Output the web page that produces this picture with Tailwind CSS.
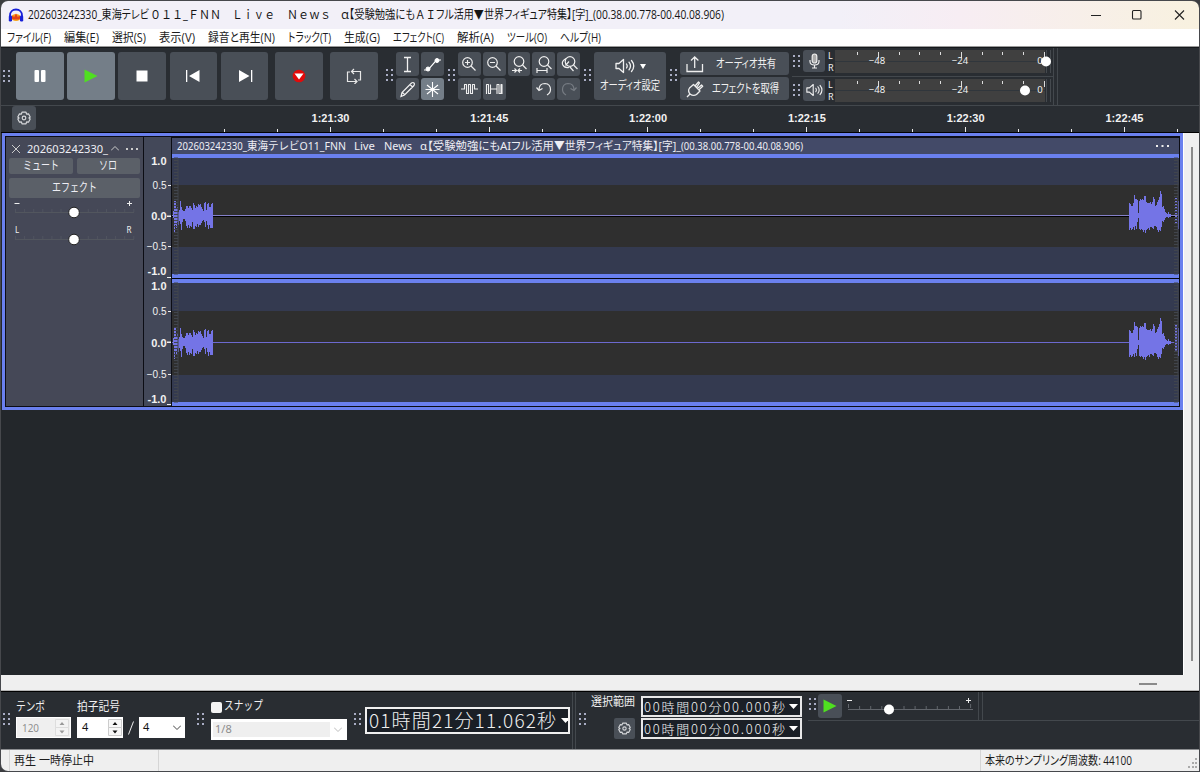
<!DOCTYPE html>
<html lang="ja">

<head>
  <meta charset="UTF-8">
  <meta name="viewport" content="width=device-width, initial-scale=1.0">
  <title>Audacity</title>
  <script src="https://cdn.jsdelivr.net/npm/@tailwindcss/browser@4"></script>
</head>

<body class="bg-[#3b3d40]">
  <!-- shared icons -->
  <svg class="hidden" xmlns="http://www.w3.org/2000/svg">
    <symbol id="grip" viewBox="0 0 8 12">
      <path fill="#a9adc4" d="M0 0h2v2H0zM5 0h2v2H5zM0 5h2v2H0zM5 5h2v2H5zM0 10h2v2H0zM5 10h2v2H5z" />
    </symbol>
    <symbol id="gear" viewBox="0 0 14 14">
      <g fill="none" stroke="#d5d7da" stroke-width="1.2" stroke-linejoin="round">
        <path d="M5 1.2h4l.6 1.9 1.9-.3L13.2 6l-1.3 1 1.3 1-1.7 3.2-1.9-.3-.6 1.9H5l-.6-1.9-1.9.3L.8 8l1.3-1L.8 6l1.7-3.2 1.9.3z" />
        <circle cx="7" cy="7" r="1.8" />
      </g>
    </symbol>
    <symbol id="speaker" viewBox="0 0 20 16">
      <g fill="none" stroke="#f0f0f0" stroke-width="1.3" stroke-linejoin="round" stroke-linecap="round">
        <path d="M1 5.5h3L8.500 1.500v13L4 10.500H1z" />
        <path d="M11.500 6q1.400 2 0 4M14 4.200q3 3.800 0 7.600M16.500 2.500q4.500 5.500 0 11" />
      </g>
    </symbol>
  </svg>

  <div class="flex h-[772px] w-[1200px] flex-col overflow-hidden rounded-t-lg rounded-bl-lg border border-[#46484c] bg-[#23272b] font-['Noto_Sans','Noto_Sans_CJK_JP',sans-serif] text-xs">

    <!-- title bar -->
    <div class="flex h-[28px] shrink-0 items-center bg-linear-to-r from-[#f2f0f8] from-70% via-[#f7edf3] via-80% to-[#f8f1df] pl-[7px] font-['Open_Sans','Noto_Sans_CJK_JP',sans-serif] text-[#151515]">
      <svg class="mr-[4px] h-[15px] w-[16px]" viewBox="0 0 16 15">
        <ellipse cx="8" cy="9.500" rx="4.800" ry="3.600" fill="#f7a41c" />
        <path d="M3 9.500l2-2 1 2 2-4 2 4 1-2 2 2-2 2H5z" fill="#e2401b" />
        <path d="M2 10V7.500C2 4 4.500 1.500 8 1.500S14 4 14 7.500V10" fill="none" stroke="#1720d8" stroke-width="1.800" />
        <rect x=".8" y="7.500" width="3.200" height="6" rx="1.200" fill="#1720d8" />
        <rect x="12" y="7.500" width="3.200" height="6" rx="1.200" fill="#1720d8" />
      </svg>
      <span data-w="121" class="[font-feature-settings:'palt']">202603242330_東海テレビ</span>
      <span class="ml-px" data-w="71">０１１_ＦＮＮ</span>
      <span class="ml-[11px]" data-w="43">Ｌｉｖｅ</span>
      <span class="ml-[12px]" data-w="44">Ｎｅｗｓ</span>
      <span class="ml-[10px]" data-w="8">α</span>
      <span data-w="66" class="[font-feature-settings:'palt']">【受験勉強にも</span>
      <span data-w="21">ＡＩ</span>
      <span data-w="157" class="[font-feature-settings:'palt']">フル活用▼世界フィギュア特集】[字]_</span>
      <span data-w="131">(00.38.00.778-00.40.08.906)</span>
      <svg class="mr-[14px] ml-auto h-[12px] w-[94px]" viewBox="0 0 94 12" fill="none" stroke="#222" stroke-width="1.100">
        <path d="M0 6.500h10M84 1.500l9 9M93 1.500l-9 9" />
        <rect x="41.500" y="1.500" width="8.500" height="8.500" rx="1" />
      </svg>
    </div>

    <!-- menu -->
    <div class="flex h-[18px] shrink-0 items-center gap-[13px] border-b border-[#9a9a9a] bg-white pl-[6px] font-['Open_Sans','Noto_Sans_CJK_JP',sans-serif] text-[#1c1c1c] [font-feature-settings:'palt']">
      <span data-w="44">ファイル(F)</span>
      <span data-w="35">編集(E)</span>
      <span data-w="34">選択(S)</span>
      <span data-w="36">表示(V)</span>
      <span data-w="67">録音と再生(N)</span>
      <span data-w="43">トラック(T)</span>
      <span data-w="36">生成(G)</span>
      <span data-w="51">エフェクト(C)</span>
      <span data-w="37">解析(A)</span>
      <span data-w="40">ツール(O)</span>
      <span data-w="41">ヘルプ(H)</span>
    </div>

    <!-- top toolbars -->
    <div class="flex h-[59px] shrink-0 border-t border-b border-t-[#15181b] border-b-[#43484d] bg-[#292d32] text-[#f0f0f0]">
      <div class="flex w-[381px] shrink-0 items-center pl-[2px] pb-px">
        <svg class="mr-[5px] h-3 w-2"><use href="#grip" /></svg>
        <div class="flex gap-[3.500px] *:flex *:h-12 *:w-[47.700px] *:items-center *:justify-center *:rounded-[3px]">
          <button class="bg-[#747e88]"><svg class="size-4" viewBox="0 0 16 16" fill="#fff"><rect x="2.500" y="2" width="4.500" height="12" rx="1" /><rect x="9" y="2" width="4.500" height="12" rx="1" /></svg></button>
          <button class="bg-[#747e88]"><svg class="size-4" viewBox="0 0 16 16" fill="#4fe020"><path d="M1.500 1.500L14.500 8l-13 6.500z" /></svg></button>
          <button class="bg-[#494f57]"><svg class="size-4" viewBox="0 0 16 16" fill="#fff"><path d="M2.500 2.500h11v11h-11z" /></svg></button>
          <button class="bg-[#494f57]"><svg class="size-4" viewBox="0 0 16 16" fill="#fff"><path d="M1 2h1.300v12H1zM14.500 2v12L4 8z" /></svg></button>
          <button class="bg-[#494f57]"><svg class="size-4" viewBox="0 0 16 16" fill="#fff"><path d="M14 2h1.300v12H14zM2 2v12l10.500-6z" /></svg></button>
        </div>
        <button class="ml-[7px] flex h-12 w-[48px] items-center justify-center rounded-[3px] bg-[#494f57]"><svg class="size-4" viewBox="0 0 16 16"><circle cx="8" cy="8" r="6.300" fill="#e00b0b" /><path d="M3.500 5.500h9L8 11.500z" fill="#fff" /></svg></button>
        <button class="ml-[7px] flex h-12 w-[48px] items-center justify-center rounded-[3px] bg-[#494f57]"><svg class="size-4" viewBox="0 0 16 16" fill="none" stroke="#e8e8e8" stroke-width="1.200"><path d="M4 4H1.500v9.500h9M8.500 11l2.500 2.500L8.500 16M12 12h2.500V3.500h-9M8 1L5.500 3.500 8 6" /></svg></button>
      </div>

      <svg class="mt-[21px] mr-[2px] ml-[4px] h-3 w-2 shrink-0"><use href="#grip" /></svg>
      <div class="mt-1 grid h-12 w-[48px] shrink-0 grid-cols-2 gap-[2px] *:flex *:items-center *:justify-center *:rounded-[3px] *:bg-[#494f57]">
        <button><svg class="size-[17px]" viewBox="0 0 17 17" fill="none" stroke="#f2f2f2" stroke-width="1.300"><path d="M5 1.500h7M5 15.500h7M8.500 1.500v14" /></svg></button>
        <button><svg class="size-[19px]" viewBox="0 0 19 19" stroke="#fff" fill="#fff"><path d="M1 15h4L13.500 5H18" fill="none" stroke-width="1.200" /><circle cx="5" cy="14" r="2" /><circle cx="14" cy="5.500" r="2" /></svg></button>
        <button><svg class="size-[17px]" viewBox="0 0 17 17" fill="none" stroke="#f2f2f2" stroke-width="1.200"><path d="M2 15.500l1-4L12.500 2q1.500-1 2.500 0t0 2.500L5.500 14zM11 3.500L13.500 6M3 11.500q2 .5 2.500 2.500" /></svg></button>
        <button class="bg-[#747e88]!"><svg class="size-[17px]" viewBox="0 0 17 17" fill="none" stroke="#fff" stroke-width="1.100"><path d="M8.500 1v15M1.500 8.500h14M3 4l11 9M14 4L3 13" /></svg></button>
      </div>

      <svg class="mt-[21px] mr-[2px] ml-[4px] h-3 w-2 shrink-0"><use href="#grip" /></svg>
      <div class="mt-1 grid h-12 w-[122px] shrink-0 grid-cols-5 gap-[2px] *:flex *:items-center *:justify-center *:rounded-[3px] *:bg-[#494f57]">
        <button><svg class="size-4" viewBox="0 0 16 16" fill="none" stroke="#eee" stroke-width="1.200"><circle cx="6.500" cy="6.500" r="4.800" /><path d="M10 10l4.500 4.500M4 6.500h5M6.500 4v5" /></svg></button>
        <button><svg class="size-4" viewBox="0 0 16 16" fill="none" stroke="#eee" stroke-width="1.200"><circle cx="6.500" cy="6.500" r="4.800" /><path d="M10 10l4.500 4.500M4 6.500h5" /></svg></button>
        <button><svg class="size-[18px]" viewBox="0 0 18 18" fill="none" stroke="#eee" stroke-width="1.200"><circle cx="9" cy="6.500" r="4.800" /><path d="M12.500 10l4 4M2 15.500h4.500M8 15.500h4M4.500 13.500l2 2-2 2M10 13.500l-2 2 2 2" /></svg></button>
        <button><svg class="size-[18px]" viewBox="0 0 18 18" fill="none" stroke="#eee" stroke-width="1.200"><circle cx="9" cy="6.500" r="4.800" /><path d="M12.500 10l4 4M2 15.500h10M2 13v5M12 13v5" /></svg></button>
        <button><svg class="size-[18px]" viewBox="0 0 18 18" fill="none" stroke="#eee" stroke-width="1.200"><circle cx="10" cy="6.500" r="4.800" /><path d="M13.500 10l4 4M6 3.500Q1.500 6 2.500 9.500q2 4 6.500 3M9.500 11.500l4 4.500M5.500 10.500L9 6.500" /></svg></button>
        <button><svg class="h-[14px] w-[18px]" viewBox="0 0 18 14" fill="none" stroke="#eee" stroke-width="1.100" stroke-linejoin="round"><path d="M1 7h3.500V2.500h2v9h2v-9h2v9h2v-9h2V7H18" /></svg></button>
        <button><svg class="h-[14px] w-[18px]" viewBox="0 0 18 14" fill="none" stroke="#eee" stroke-width="1.100" stroke-linejoin="round"><path d="M1.500 12V2.500h2v9h2V7h6.500v4.500h0v-9h2v9h2v-9h1V12M5.500 7V2.500" /></svg></button>
        <button class="col-start-4"><svg class="size-4" viewBox="0 0 16 16" fill="none" stroke="#eee" stroke-width="1.200"><path d="M3 9Q3 2.500 9 2.500q5.500.5 5.500 6 0 3.500-3.500 5.500M.5 6.500L3 9.500l3.500-2" /></svg></button>
        <button><svg class="size-4" viewBox="0 0 16 16" fill="none" stroke="#777c83" stroke-width="1.200"><path d="M13 9Q13 2.500 7 2.500 1.500 3 1.500 8.500 1.500 12 5 14M15.500 6.500L13 9.500l-3.500-2" /></svg></button>
      </div>

      <svg class="mt-[21px] mr-[2px] ml-[4px] h-3 w-2 shrink-0"><use href="#grip" /></svg>
      <button class="mt-1 flex h-12 w-[72px] shrink-0 flex-col items-center rounded-[3px] bg-[#494f57] pt-[6px] [font-feature-settings:'palt']">
        <span class="flex items-center gap-[5px]"><svg class="h-4 w-5"><use href="#speaker" /></svg><svg class="h-[5px] w-[6px]" viewBox="0 0 6 5" fill="#fff"><path d="M0 0h6L3 5z" /></svg></span>
        <span class="mt-[4px]" data-w="60">オーディオ設定</span>
      </button>

      <svg class="mt-[21px] mr-[2px] ml-[4px] h-3 w-2 shrink-0"><use href="#grip" /></svg>
      <div class="mt-1 grid h-12 w-[109px] shrink-0 grid-rows-2 gap-[2px] *:flex *:items-center *:rounded-[3px] *:bg-[#494f57] *:pl-[6px]">
        <button class="[font-feature-settings:'palt']"><svg class="mr-[12px] size-[18px]" viewBox="0 0 18 18" fill="none" stroke="#eee" stroke-width="1.300"><path d="M1 9v7.500h15.500V9M8.700 13V2M5 5.500L8.700 2l3.700 3.500" /></svg><span data-w="60">オーディオ共有</span></button>
        <button class="[font-feature-settings:'palt']"><svg class="mr-[8px] size-[18px]" viewBox="0 0 18 18" fill="none" stroke="#eee" stroke-width="1.300" stroke-linejoin="round"><path d="M1 17l3-3q-2.500-3-.5-6l4-3.500L14 11l-3.500 3.500q-3 2-6.500-.5M9 6l3.500-4 1 1L10.500 7.500M11.500 8.500L15.500 5l1.200 1.200-4 3.800" /></svg><span data-w="67">エフェクトを取得</span></button>
      </div>

      <!-- level meters -->
      <div class="ml-[3px] flex w-[261px] shrink-0 flex-col">
        <div class="flex h-[29px] border-b border-[#43484d] pt-[2px]">
          <svg class="mt-[5px] mr-[2px] ml-px h-3 w-2"><use href="#grip" /></svg>
          <button class="flex h-[22px] w-[22px] items-center justify-center rounded-[3px] bg-[#494f57]"><svg class="h-4 w-[11px]" viewBox="0 0 11 16" fill="none" stroke="#eee" stroke-width="1.200"><rect x="3.200" y="1" width="4.600" height="9" rx="2.300" fill="#aaa" /><path d="M1 7v1.500q0 3.500 4.500 3.500T10 8.500V7M5.500 12v3M3 15h5" /></svg></button>
          <div class="ml-[3px] flex w-[7px] flex-col text-[9px] leading-3"><span>L</span><span>R</span></div>
          <svg class="h-6 w-[218px] shrink-0" data-knob="210"></svg>
        </div>
        <div class="flex pt-[2px]">
          <svg class="mt-[5px] mr-[2px] ml-px h-3 w-2"><use href="#grip" /></svg>
          <button class="flex h-[22px] w-[22px] items-center justify-center rounded-[3px] bg-[#494f57]"><svg class="h-[14px] w-[17px]"><use href="#speaker" /></svg></button>
          <div class="ml-[3px] flex w-[7px] flex-col text-[9px] leading-3"><span>L</span><span>R</span></div>
          <svg class="h-6 w-[218px] shrink-0" data-knob="189"></svg>
        </div>
      </div>
      <div class="w-[5px] border-x border-[#43484d]"></div>
    </div>

    <!-- timeline -->
    <div class="flex h-[27px] shrink-0 border-b border-black bg-[#292d32] pl-[11px]">
      <button class="flex h-6 w-[24px] shrink-0 items-center justify-center rounded-[3px] bg-[#494f57]"><svg class="size-[14px]"><use href="#gear" /></svg></button>
      <svg id="timeline" class="h-[26px] w-[1164px] shrink-0 font-['Liberation_Sans'] text-[11px] font-bold" viewBox="36 106 1164 26"></svg>
    </div>

    <!-- tracks -->
    <div class="flex h-[542px] shrink-0">
      <div class="w-[1182px] shrink-0 pl-px">
        <div class="flex h-[277px] border-[3px] border-[#6a80ee] bg-[#0c0d14] pt-px pb-px pl-px text-[#eeeef4]">
          <div class="flex w-[137px] shrink-0 flex-col bg-[#454857] px-[3px] pt-px">
            <div class="flex h-[19px] items-center pt-[2px] pl-[3px]">
              <svg class="mr-[7px] size-[8px]" viewBox="0 0 8 8" stroke="#ccc"><path d="M0 0l8 8M8 0L0 8" /></svg>
              <span data-w="81" class="text-[11px]">202603242330_</span>
              <svg class="ml-[3px] h-[5px] w-[8px]" viewBox="0 0 8 5" fill="none" stroke="#ccc"><path d="M0 4.500l4-4 4 4" /></svg>
              <svg class="ml-[7px] h-[2px] w-[12px]" viewBox="0 0 12 2" fill="#ccc"><path d="M0 0h2v2H0zM5 0h2v2H5zM10 0h2v2h-2z" /></svg>
            </div>
            <div class="mt-px grid grid-cols-2 gap-[4px] *:flex *:h-4 *:items-center *:justify-center *:rounded-[2px] *:bg-[#5b6068]">
              <button><span data-w="36">ミュート</span></button>
              <button><span data-w="18">ソロ</span></button>
            </div>
            <button class="mt-[4px] flex h-5 items-center justify-center rounded-[2px] bg-[#5b6068]"><span data-w="45">エフェクト</span></button>
            <svg class="-ml-[3px] h-[54px] w-[137px]" viewBox="6 198 137 54" id="sliders"></svg>
          </div>
          <svg id="scale" class="ml-px h-[269px] w-[27px] shrink-0 bg-[#434859] font-['Liberation_Sans'] text-[11px]" viewBox="144 137 27 269"></svg>
          <div class="ml-px flex w-[1007px] shrink-0 flex-col">
            <div class="mt-px flex h-4 shrink-0 items-center bg-[#434a68] pl-[5px] text-[11px]">
              <span data-w="70">202603242330_</span>
              <span data-w="99">東海テレビO11_FNN</span>
              <span class="ml-[8px]" data-w="21">Live</span>
              <span class="ml-[9px]" data-w="28">News</span>
              <span class="ml-[8px] [font-feature-settings:'palt']" data-w="134">α【受験勉強にもAIフル活用</span>
              <span class="[font-feature-settings:'palt']" data-w="127">▼世界フィギュア特集】[字]_</span>
              <span data-w="122">(00.38.00.778-00.40.08.906)</span>
              <svg class="mr-[10px] ml-auto h-[2px] w-[13px]" viewBox="0 0 13 2" fill="#eee"><path d="M0 0h2v2H0zM5.500 0h2v2h-2zM11 0h2v2h-2z" /></svg>
            </div>
            <svg id="wave" class="h-[252px] w-[1007px] shrink-0" viewBox="172 154 1007 252"></svg>
          </div>
        </div>
      </div>
      <div class="flex w-[16px] justify-center border-l border-white bg-[#efefef] pt-[14px]"><div class="h-[514px] w-[2px] bg-[#8a8a8a]"></div></div>
    </div>

    <!-- horizontal scrollbar -->
    <div class="flex h-[16px] shrink-0 items-center justify-end border-b border-[#b5b5b5] bg-[#efefef] pr-[42px]"><div class="mt-[2px] h-[2px] w-[18px] bg-[#8a8a8a]"></div></div>

    <!-- bottom toolbars -->
    <div class="flex h-[59px] shrink-0 border-t border-b border-t-black border-b-[#8b8d90] bg-[#292d32] text-[#f0f0f0]">
      <svg class="mt-[21px] mr-[5px] ml-[2px] h-3 w-2 shrink-0"><use href="#grip" /></svg>
      <div class="flex w-[181px] shrink-0 gap-[6px] pt-[5px]">
        <div class="w-[55px]">
          <div class="flex h-5 items-center"><span data-w="29">テンポ</span></div>
          <div class="flex h-[21px] items-center border border-white bg-[#efefef] pl-[5px] text-[11px] text-[#909090]">
            <span data-w="17">120</span>
            <svg class="ml-auto h-[19px] w-[15px]" viewBox="0 0 15 19"><path d="M.5 1.500h13v8H.5zM.5 9.500h13v8H.5z" fill="#f3f3f3" stroke="#ddd" /><path d="M4.500 7h5L7 4zM4.500 12.500h5l-2.500 3z" fill="#999" /></svg>
          </div>
        </div>
        <div>
          <div class="flex h-5 items-center"><span data-w="43">拍子記号</span></div>
          <div class="flex items-center">
            <div class="flex h-[21px] w-[46px] items-center bg-white pl-[5px] text-[11px] text-[#111]">
              <span>4</span>
              <svg class="ml-auto h-[19px] w-[15px]" viewBox="0 0 15 19"><path d="M.5 1.500h13v8H.5zM.5 9.500h13v8H.5z" fill="#f7f7f7" stroke="#ccc" /><path d="M4.500 7h5L7 4zM4.500 12.500h5l-2.500 3z" fill="#111" /></svg>
            </div>
            <svg class="mx-[5px] h-[14px] w-[6px]" viewBox="0 0 6 14" stroke="#eee"><path d="M.5 13.500L5.500.5" /></svg>
            <div class="flex h-[21px] w-[46px] items-center bg-white px-[4px] text-[11px] text-[#111]"><span>4</span><svg class="ml-auto h-[5px] w-[8px]" viewBox="0 0 8 5" fill="none" stroke="#444"><path d="M0 .5l4 4 4-4" /></svg></div>
          </div>
        </div>
      </div>
      <svg class="mt-[21px] mr-[6px] h-3 w-2 shrink-0"><use href="#grip" /></svg>
      <div class="w-[136px] shrink-0 pt-[5px]">
        <div class="flex h-[18px] items-center"><span class="mt-[2px] mr-[2px] h-[11px] w-[11px] rounded-[2px] bg-[#f3f3f3]"></span><span data-w="39">スナップ</span></div>
        <div class="mt-[4px] flex h-[21px] items-center border-2 border-white bg-white pr-[3px] text-[11px] text-[#8c8c8c]"><span class="flex h-[15px] w-[117px] items-center bg-[#efefef] pl-[2px]">1/8</span><svg class="ml-auto h-[5px] w-[8px]" viewBox="0 0 8 5" fill="none" stroke="#bbb"><path d="M0 .5l4 4 4-4" /></svg></div>
      </div>
      <svg class="mt-[21px] mr-[3px] ml-[7px] h-3 w-2 shrink-0"><use href="#grip" /></svg>
      <div class="mt-[15px] flex h-[27px] w-[205px] shrink-0 items-center border-2 border-[#f0f0f0] bg-[#1a1f26] pl-[2px] font-['Noto_Sans_CJK_JP',sans-serif] font-light">
        <span data-w="187" data-sp="spacing" class="text-[19px]">01時間21分11.062秒</span>
        <svg class="ml-auto h-[5px] w-[7px] shrink-0" viewBox="0 0 7 5" fill="#fff"><path d="M0 0h9L4.500 5z" /></svg>
      </div>
      <div class="mr-[3px] ml-[2px] w-[4px] shrink-0 border-x border-[#43484d]"></div>
      <svg class="mt-[21px] mr-[4px] h-3 w-2 shrink-0"><use href="#grip" /></svg>
      <div class="flex w-[44px] shrink-0 flex-col items-end pt-[2px]">
        <span data-w="44">選択範囲</span>
        <button class="mt-[8px] flex size-[21px] items-center justify-center rounded-[2px] bg-[#494f57]"><svg class="size-[13px]" viewBox="0 0 14 14"><use href="#gear" /></svg></button>
      </div>
      <div class="ml-[6px] flex w-[161px] shrink-0 flex-col gap-px pt-[4px] font-['Noto_Sans_CJK_JP',sans-serif] font-light *:flex *:h-[21px] *:items-center *:border-2 *:border-[#e8e8e8] *:bg-[#1a1f26] *:pr-[2px] *:pl-px">
        <div><span data-w="141" data-sp="spacing" class="text-[13px]">00時間00分00.000秒</span><svg class="ml-auto h-[5px] w-[9px]" viewBox="0 0 9 5" fill="#fff"><path d="M0 0h9L4.500 5z" /></svg></div>
        <div><span data-w="141" data-sp="spacing" class="text-[13px]">00時間00分00.000秒</span><svg class="ml-auto h-[5px] w-[9px]" viewBox="0 0 9 5" fill="#fff"><path d="M0 0h9L4.500 5z" /></svg></div>
      </div>
      <div class="ml-[6px] grow">
        <div class="flex h-[29px] border-b border-[#43484d]">
          <svg class="mt-[6px] mr-px ml-px h-3 w-2"><use href="#grip" /></svg>
          <button class="mt-[2px] flex size-6 items-center justify-center rounded-[3px] bg-[#494f57]"><svg class="size-[14px]" viewBox="0 0 14 14" fill="#4fe020"><path d="M.5.5L13.500 7l-13 6.500z" /></svg></button>
          <svg id="speed" class="ml-[4px] h-[28px] w-[128px] shrink-0" viewBox="846 692 128 28"></svg>
          <div class="ml-[4px] w-[5px] border-x border-[#43484d]"></div>
        </div>
      </div>
    </div>

    <!-- status bar -->
    <div class="flex grow items-stretch bg-[#efefef] text-[#1c1c1c]">
      <div class="w-[9px] border-r border-[#d5d5d5]"></div>
      <div class="flex w-[149px] items-center border-r border-[#d5d5d5] pl-[4px]"><span data-w="80">再生 一時停止中</span></div>
      <div class="w-[822px] border-r border-[#d5d5d5]"></div>
      <div class="flex items-center pl-[4px] font-['Open_Sans','Noto_Sans_CJK_JP',sans-serif] [font-feature-settings:'palt']"><span data-w="147">本来のサンプリング周波数: 44100</span></div>
      <svg class="mt-[8px] ml-auto size-[11px]" viewBox="0 0 11 11" fill="#aaa"><path d="M7 0h2v2H7zM4 4h2v2H4zM7 4h2v2H7zM0 8h2v2H0zM4 8h2v2H4zM7 8h2v2H7z" /></svg>
    </div>
  </div>

  <script>
    // condense each label to its own column width
    document.querySelectorAll('[data-w]').forEach(function (el) {
      var w = el.dataset.w;
      el.style.flexShrink = '0';
      el.innerHTML = '<svg width="' + w + '" height="16" overflow="visible" style="display:block"><text x="0" y="8" dy=".36em" fill="currentColor" textLength="' +
        w + '" lengthAdjust="' + (el.dataset.sp || 'spacingAndGlyphs') + '">' + el.textContent + '</text></svg>';
    });

    function rect(x, y, w, h, fill) {
      return '<rect x="' + x + '" y="' + y + '" width="' + w + '" height="' + h + '" fill="' + fill + '"/>';
    }
    function label(x, y, text, anchor, extra) {
      return '<text x="' + x + '" y="' + y + '" text-anchor="' + anchor + '" fill="#f2f2f2" ' + (extra || '') + '>' + text + '</text>';
    }

    // timeline ticks
    var times = ['1:21:30', '1:21:45', '1:22:00', '1:22:15', '1:22:30', '1:22:45'];
    var out = '';
    for (var i = 0; i < 19; i++) {
      var major = i % 3 === 2;
      out += rect(Math.round(224 + i * 52.93), major ? 127 : 129, 1, major ? 5 : 3, '#e8e8e8');
      if (major) out += label(330.500 + (i - 2) * 52.93, 122, times[(i - 2) / 3], 'middle');
    }
    document.getElementById('timeline').innerHTML = out;

    // meters
    document.querySelectorAll('[data-knob]').forEach(function (el) {
      var s = rect(0, 0, 210, 11, '#404040') + rect(0, 12, 210, 11, '#404040') + rect(0, 11, 210, 1, '#30363c');
      s += '<path d="M211.500 0v23M215.500 0v23" stroke="#454a4f"/>';
      for (var k = 0; k < 10; k++) {
        s += rect(Math.round(22 + k * 20.75), 2, 1, k % 4 === 1 ? 6 : 3, '#ddd');
      }
      var f = 'font-size="9.500" font-family="Noto Sans"';
      s += label(42, 13.500, '−48', 'middle', f) + label(125, 13.500, '−24', 'middle', f) + label(205, 13.500, '0', 'middle', f);
      s += '<circle cx="' + (Number(el.dataset.knob) + 1) + '" cy="11.500" r="5" fill="#fff"/>';
      el.innerHTML = s;
    });

    // gain, pan
    out = '';
    [212, 239].forEach(function (y) {
      out += rect(15, y, 119, 1, '#52565e');
      for (var k = 0; k < 14; k++) out += rect(15 + k * 9.1, y - 3, 1, 3, '#505460');
      out += '<circle cx="74" cy="' + (y + .500) + '" r="5.300" fill="#fff" stroke="#222"/>';
    });
    out += rect(14.500, 203, 5, 1, '#eee') + rect(127, 203, 5, 1, '#eee') + rect(129, 201, 1, 5, '#eee');
    out += label(17, 233, 'L', 'middle', 'font-size="8"') + label(129, 233, 'R', 'middle', 'font-size="8"');
    document.getElementById('sliders').innerHTML = out;

    // amplitude scale
    out = '';
    [[164.500, 188.500, 220, 249.500, 274.500, 216, 278], [290, 314.500, 346.500, 377.500, 402.500, 342, 405]].forEach(function (c) {
      out += label(166.500, c[0], '1.0', 'end', 'font-weight="bold"');
      out += label(166.500, c[1], '0.5', 'end', 'font-size="10"');
      out += label(166.500, c[2], '0.0', 'end', 'font-weight="bold"');
      out += label(166.500, c[3], '−0.5', 'end', 'font-size="10"');
      out += label(166.500, c[4], '-1.0', 'end', 'font-weight="bold"');
      out += rect(168, c[1] - 3.500, 3, 1, '#eee') + rect(167, c[5] - .500, 4, 1.500, '#eee') + rect(168, c[3] - 3.500, 3, 1, '#eee') + rect(167, c[6] - 1, 4, 1, '#eee');
    });
    document.getElementById('scale').innerHTML = out;

    // [up, down] per pixel
    var left = [[4, 2], [14, 16], [14, 9], [6, 12], [8, 6], [3, 9], [5, 5], [14, 8], [8, 14], [5, 6], [4, 3], [4, 3], [6, 5], [9, 10], [9, 12], [7, 9],
      [9, 12], [9, 10], [7, 11], [5, 6], [12, 13], [10, 13], [7, 10], [9, 11], [8, 8], [11, 11], [10, 9], [11, 9], [8, 7], [6, 5], [4, 4],
      [12, 6], [13, 11], [5, 5], [11, 9], [12, 13], [8, 9], [8, 12], [11, 12], [12, 12]];
    var right = [[12, 14], [11, 12], [9, 14], [9, 13], [12, 11], [20, 14], [16, 10], [16, 13], [15, 6], [2, 2], [14, 13], [16, 14], [15, 13], [16, 14],
      [15, 16], [19, 14], [19, 17], [13, 14], [12, 13], [12, 12], [12, 14], [13, 11], [11, 11], [13, 12], [18, 13], [16, 10], [9, 10], [10, 11], [13, 14],
      [15, 16], [18, 14], [24, 15], [21, 11], [8, 5], [9, 6], [6, 4], [3, 2], [2, 1], [1, 1], [3, 2], [1, 1], [1, 1]];
    function channel(top, bottom, d1, d2, mid, line) {
      var s = rect(172, top, 1007, bottom - top, '#343a50') + rect(172, d1, 1007, d2 - d1, '#2f2f2f');
      s += rect(172, top - 4, 1007, 4, '#6a80ee') + rect(172, bottom, 1007, 4, '#6a80ee');
      s += rect(172, mid, 1007, 1, line);
      if (top < 200) s += rect(172, mid + 1, 1007, 1, '#000');
      left.forEach(function (a, k) { s += rect(173 + k, mid - a[0], 1, a[0] + a[1] + 1, '#7474e6'); });
      right.forEach(function (a, k) { s += rect(1129 + k, mid - a[0], 1, a[0] + a[1] + 1, '#7474e6'); });
      for (var y = mid - 17; y < mid + 10; y += 3) s += rect(1175, y, 2, 1.500, '#7474e6');
      s += rect(1178, mid - 14, 1, 28, '#7474e6');
      // trim handles
      [174, 1174].forEach(function (x) {
        s += '<path d="M' + x + ' ' + top + 'h4v' + (bottom - top) + 'h-4" fill="none" stroke="#41454d"/>';
        for (var y = top + 2; y < bottom; y += 3) s += rect(x, y, 4, 1, '#41454d');
      });
      return s;
    }
    document.getElementById('wave').innerHTML = rect(172, 154, 1007, 252, '#05060c') +
      channel(158, 274, 185, 247, 215, '#8480c8') + channel(283, 402, 311, 375, 342, '#6c69cf');

    // playback speed
    out = rect(848, 709, 125, 1, '#62666c');
    for (var k = 0; k < 12; k++) out += rect(848 + k * 11.1, k === 0 || k === 11 ? 704 : 706, 1, 4, '#62666c');
    out += '<circle cx="889" cy="709.500" r="5" fill="#fff"/>';
    out += rect(847, 700, 5, 1, '#eee') + rect(966, 700, 5, 1, '#eee') + rect(968, 698, 1, 5, '#eee');
    document.getElementById('speed').innerHTML = out;
  </script>
</body>

</html>
